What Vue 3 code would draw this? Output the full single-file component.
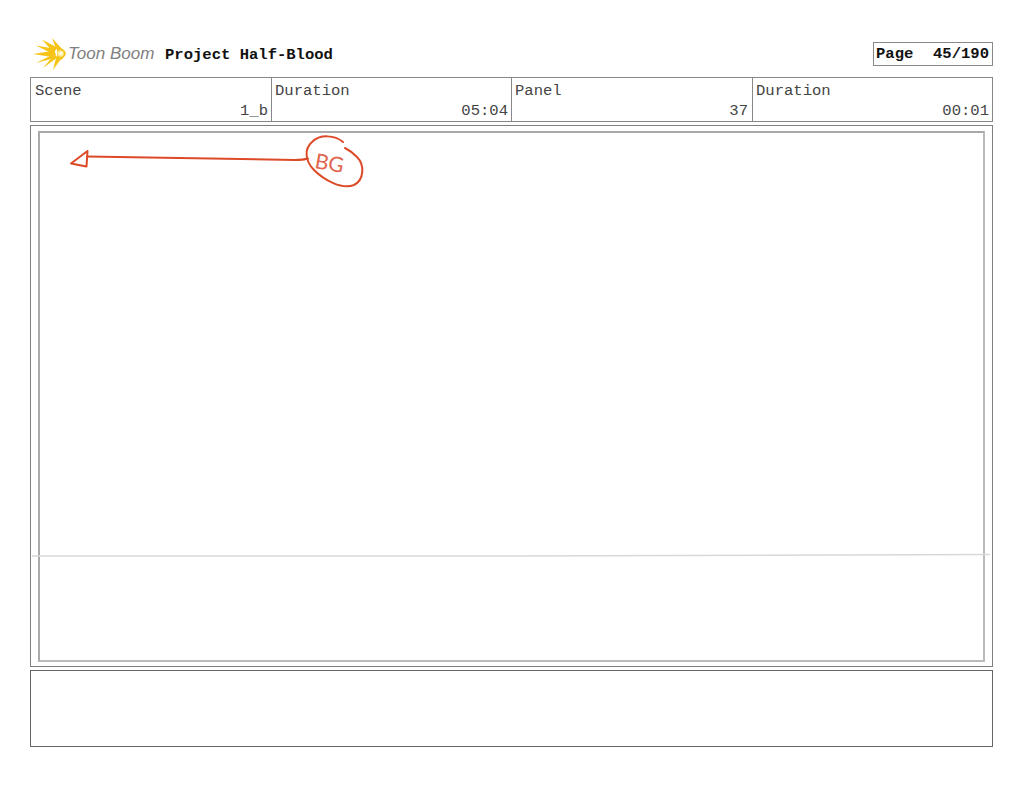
<script setup>
const cells = [
  { label: 'Scene', value: '1_b' },
  { label: 'Duration', value: '05:04' },
  { label: 'Panel', value: '37' },
  { label: 'Duration', value: '00:01' }
]
const rays = [
  'M0 16 L22 12.500 L22 19.500 Z',
  'M3 7.500 L23 11 L20 16 Z',
  'M9 1.500 L25 10 L20 14 Z',
  'M19 0 L28 10 L23 11 Z',
  'M3 25 L23 15 L22 20 Z',
  'M10 30 L25 19 L21 17 Z',
  'M20 32 L28 21 L23 20 Z'
]
</script>

<template>
  <div class="page">
    <header class="head">
      <div class="brand">
        <svg class="burst" width="34" height="32" viewBox="0 0 34 32">
          <path v-for="(r, i) in rays" :key="i" fill="#f6c417" :d="r" />
          <path fill="#f6c417" d="M24 9 Q31 9.500 33 15.500 Q31 22 24 22.500 Z" />
          <circle cx="27.500" cy="15.500" r="3.200" fill="#fdeb9b" />
          <circle cx="28" cy="15.500" r="1.600" fill="#fffbe8" />
        </svg>
        <span class="logo-text">Toon Boom</span>
        <span class="project">Project Half-Blood</span>
      </div>
      <div class="page-no"><span>Page</span><span>45/190</span></div>
    </header>

    <section class="info">
      <div v-for="(c, i) in cells" :key="i" class="cell">
        <div>{{ c.label }}</div>
        <div class="val">{{ c.value }}</div>
      </div>
    </section>

    <section class="panel">
      <div class="frame"></div>
      <svg class="sketch" width="963" height="542" viewBox="0 0 963 542">
        <path class="horizon" d="M2 431 L480 431 L960 429.500" />
        <g class="ink">
          <path d="M57 31.500 L265 35 Q273 35 278 33.500" />
          <path d="M57.500 26 L41 38.500 L56.500 41.500 Z" />
          <path d="M313 17 C305 10 290 9 282 17 C274 24 275 36 284 45 C294 55 312 65 324 60 C334 55 335 40 327 32 C323 28 319 25 315 23" />
        </g>
        <text class="bg" x="284" y="43" transform="rotate(10 284 43)">BG</text>
      </svg>
    </section>

    <section class="caption"></section>
  </div>
</template>

<style scoped>
.page {
  width: 1024px;
  height: 793px;
  box-sizing: border-box;
  padding: 42px 31px 0 30px;
  display: flex;
  flex-direction: column;
  background: #fff;
  font-family: "Liberation Mono", monospace;
  color: #444;
}
.head {
  height: 25px;
  display: flex;
  justify-content: space-between;
  margin-bottom: 10px;
}
.brand {
  display: flex;
  align-items: center;
}
.burst {
  margin-left: 3px;
  margin-top: -2px;
  flex: none;
}
.logo-text {
  font-family: "Liberation Sans", sans-serif;
  font-style: italic;
  font-size: 17px;
  color: #808080;
  margin-left: 1px;
  margin-top: -2px;
  width: 97px;
  white-space: nowrap;
}
.project {
  font-size: 15.550px;
  font-weight: 700;
  color: #111;
  white-space: pre;
}
.page-no {
  width: 120px;
  height: 24px;
  box-sizing: border-box;
  border: 1px solid #888;
  display: flex;
  justify-content: space-between;
  align-items: center;
  padding: 0 3px 0 2px;
  font-size: 15.550px;
  font-weight: 700;
  color: #111;
}
.info {
  height: 45px;
  box-sizing: border-box;
  border: 1px solid #888;
  display: grid;
  grid-template-columns: 241px 240px 241px 1fr;
  font-size: 15.550px;
  line-height: 18px;
  margin-bottom: 3px;
}
.cell {
  padding: 4px 3px 0 3px;
  border-right: 1px solid #888;
}
.cell:first-child {
  padding-left: 4px;
}
.cell:nth-child(3) {
  padding-right: 4px;
}
.cell:last-child {
  border-right: 0;
}
.val {
  text-align: right;
  margin-top: 2px;
}
.panel {
  position: relative;
  height: 542px;
  box-sizing: border-box;
  border: 1px solid #808080;
  padding: 5px 7px 4px;
  margin-bottom: 3px;
}
.frame {
  height: 100%;
  box-sizing: border-box;
  border: 2px solid #bbb;
  border-left-color: #aaa;
  border-top-color: #a8a8a8;
}
.sketch {
  position: absolute;
  left: -1px;
  top: -1px;
  pointer-events: none;
}
.horizon {
  fill: none;
  stroke: #d8d8d8;
  stroke-width: 1.500;
}
.ink path {
  fill: none;
  stroke: #dc4a28;
  stroke-width: 2;
  stroke-linecap: round;
  stroke-linejoin: round;
}
.bg {
  font-family: "Lato", sans-serif;
  font-weight: 400;
  font-size: 21px;
  fill: #e0664e;
}
.caption {
  height: 77px;
  box-sizing: border-box;
  border: 1px solid #666;
}
</style>
